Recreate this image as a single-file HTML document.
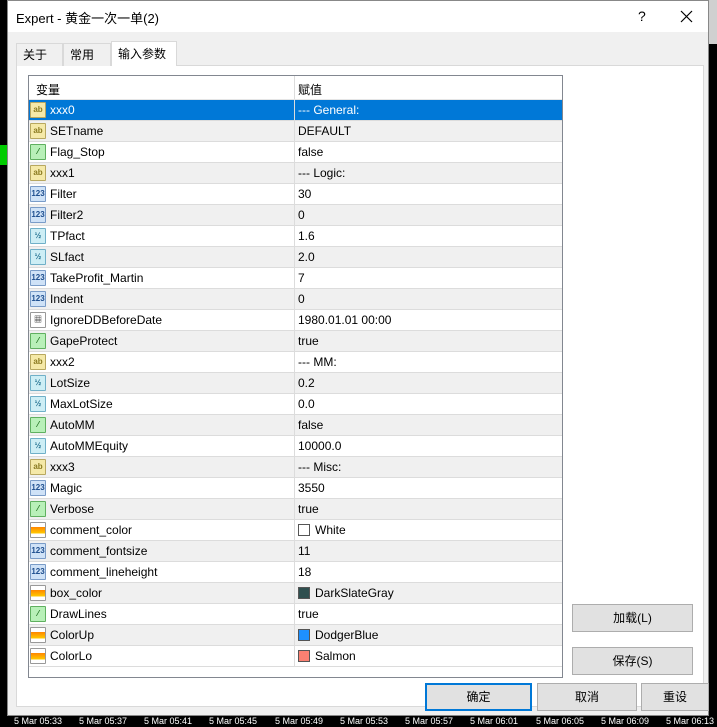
<!DOCTYPE html><html><head><meta charset="utf-8"><style>
*{margin:0;padding:0;box-sizing:border-box}
body{width:717px;height:727px;background:#000;position:relative;overflow:hidden;font-family:"Liberation Sans","Noto Sans CJK SC",sans-serif;font-size:12px;color:#000}
.abs{position:absolute}
#dlg{left:7px;top:0;width:702px;height:716px;background:#f0f0f0;border:1px solid #888}
#title{left:0;top:0;width:700px;height:31px;background:#fff}
.tab{position:absolute;top:42px;height:23px;border:1px solid #d9d9d9;border-bottom:none;background:#f0f0f0;padding:2px 0 0 6px;font-size:12px}
#panel{left:8px;top:64px;width:688px;height:642px;background:#fff;border:1px solid #d9d9d9}
#tbl{left:20px;top:74px;width:535px;height:603px;border:1px solid #828790;background:#fff}
.row{position:absolute;left:0;width:533px;height:21px;border-bottom:1px solid #dcdcdc}
.row span{position:absolute;top:3px}
.c1{left:21px}.c2{left:269px}
.sep{position:absolute;left:265px;top:0;width:1px;height:100%;background:#dcdcdc}
.ic{position:absolute;left:1px;top:2px;width:16px;height:16px;border:1px solid #b8a860;border-radius:1px;font-size:8px;font-weight:bold;line-height:14px;text-align:center}
.btn{position:absolute;background:#e1e1e1;border:1px solid #adadad;text-align:center;font-size:12px}
.sw{display:inline-block;width:12px;height:12px;vertical-align:-2px;margin-right:5px;border:1px solid #555}
</style></head><body>
<div class="abs" style="left:0;top:145px;width:7px;height:20px;background:#0c0"></div>
<div class="abs" style="left:709px;top:0;width:8px;height:44px;background:#d0d0d0"></div>
<div id="dlg" class="abs">
<div id="title" class="abs"><span class="abs" style="left:8px;top:7px;font-size:13px">Expert - 黄金一次一单(2)</span>
<span class="abs" style="left:630px;top:7px;font-size:14px">?</span>
<svg class="abs" style="left:672px;top:9px" width="13" height="13"><path d="M1 1L12 12M12 1L1 12" stroke="#000" stroke-width="1.2"/></svg></div>
<div id="panel" class="abs"></div>
<div class="tab" style="left:8px;width:47px">关于</div>
<div class="tab" style="left:55px;width:48px">常用</div>
<div class="tab" style="left:103px;top:40px;height:25px;width:66px;background:#fff;padding-top:3px">输入参数</div>
<div id="tbl" class="abs">
<div class="row" style="top:0;height:24px;border-bottom:1px solid #e5e5e5"><span class="c1" style="left:7px;top:5px">变量</span><span class="c2" style="top:5px">赋值</span><div class="sep"></div></div>
<div id="rows"></div>
</div>
<div class="btn" style="left:564px;top:603px;width:121px;height:28px;line-height:26px">加载(L)</div>
<div class="btn" style="left:564px;top:646px;width:121px;height:28px;line-height:26px">保存(S)</div>
<div class="btn" style="left:417px;top:682px;width:107px;height:28px;line-height:24px;border:2px solid #0078d7">确定</div>
<div class="btn" style="left:529px;top:682px;width:100px;height:28px;line-height:26px">取消</div>
<div class="btn" style="left:633px;top:682px;width:68px;height:28px;line-height:26px">重设</div>
</div>
<div class="abs" style="left:0;top:716px;width:717px;height:11px;color:#fff;font-size:9px;line-height:11px;white-space:nowrap">
<span class="abs" style="left:14px">5 Mar 05:33</span><span class="abs" style="left:79px">5 Mar 05:37</span><span class="abs" style="left:144px">5 Mar 05:41</span><span class="abs" style="left:209px">5 Mar 05:45</span><span class="abs" style="left:275px">5 Mar 05:49</span><span class="abs" style="left:340px">5 Mar 05:53</span><span class="abs" style="left:405px">5 Mar 05:57</span><span class="abs" style="left:470px">5 Mar 06:01</span><span class="abs" style="left:536px">5 Mar 06:05</span><span class="abs" style="left:601px">5 Mar 06:09</span><span class="abs" style="left:666px">5 Mar 06:13</span></div>
<script>
var d=[["ab","xxx0","--- General:"],["ab","SETname","DEFAULT"],["b","Flag_Stop","false"],["ab","xxx1","--- Logic:"],["i","Filter","30"],["i","Filter2","0"],["f","TPfact","1.6"],["f","SLfact","2.0"],["i","TakeProfit_Martin","7"],["i","Indent","0"],["d","IgnoreDDBeforeDate","1980.01.01 00:00"],["b","GapeProtect","true"],["ab","xxx2","--- MM:"],["f","LotSize","0.2"],["f","MaxLotSize","0.0"],["b","AutoMM","false"],["f","AutoMMEquity","10000.0"],["ab","xxx3","--- Misc:"],["i","Magic","3550"],["b","Verbose","true"],["c","comment_color","White","#fff"],["i","comment_fontsize","11"],["i","comment_lineheight","18"],["c","box_color","DarkSlateGray","#2f4f4f"],["b","DrawLines","true"],["c","ColorUp","DodgerBlue","#1e90ff"],["c","ColorLo","Salmon","#fa8072"]];
var st={ab:["#f5e9a8","#8a7a20","ab","#b8a860"],b:["#b8f0b8","#207020","⁄","#60b060"],i:["#cfe2f7","#1f4f8f","123","#7a9cc8"],f:["#cdeef5","#1f6f8f","½","#70b0c8"],d:["#fff","#333","▦","#999"],c:["#fff","#e05000","▬","#999"]};
var h="";d.forEach(function(r,k){var s=st[r[0]];var sel=k==0;var bg=sel?"#0078d7":(k%2?"#f0f0f0":"#fff");var col=sel?"#fff":"#000";
var v=r[3]?'<i class="sw" style="background:'+r[3]+'"></i>'+r[2]:r[2];
h+='<div class="row" style="top:'+(24+k*21)+'px;background:'+bg+';color:'+col+'"><div class="ic" style="background:'+s[0]+';color:'+s[1]+';border-color:'+s[3]+';'+(r[0]=='c'?'background:linear-gradient(#fff 30%,#f80 30%,#fc0 75%,#fff 75%)':'')+'">'+(r[0]=='c'?'':s[2])+'</div><span class="c1">'+r[1]+'</span><span class="c2">'+v+'</span><div class="sep"></div></div>';});
document.getElementById("rows").innerHTML=h;
</script>
</body></html>
